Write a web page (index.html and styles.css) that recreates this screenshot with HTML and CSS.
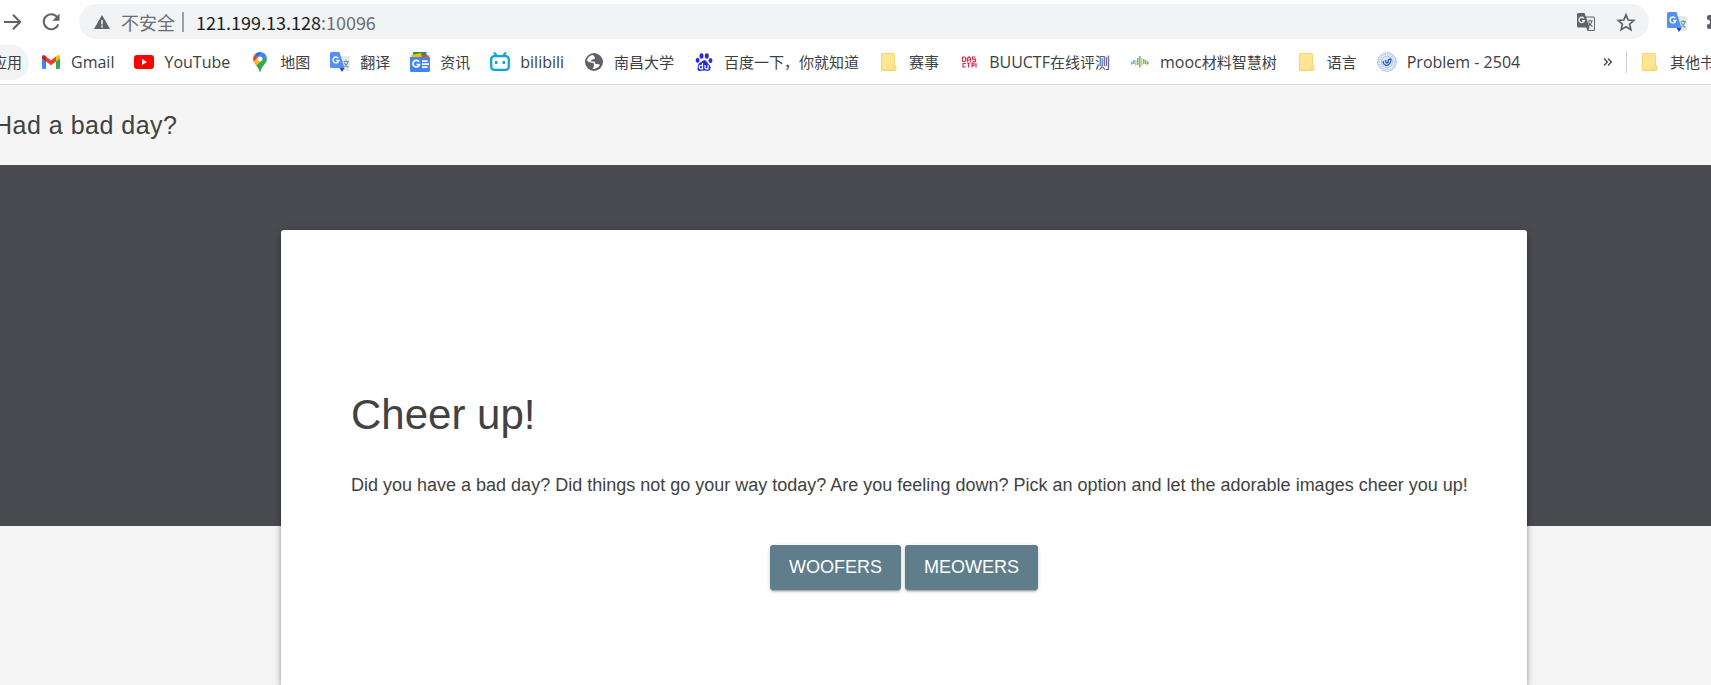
FILE: index.html
```html
<!DOCTYPE html>
<html lang="en">
<head>
<meta charset="utf-8">
<title>Had a bad day?</title>
<link rel="stylesheet" href="styles.css">
</head>
<body>
<svg class="defs" aria-hidden="true">
  <symbol id="folder" viewBox="0 0 20 20">
    <path d="M3.500 1h11q1.500 0 1.500 1.500v10.500q1.500.500 1.500 2v2q0 2-2 2h-12q-1.500 0-1.500-1.500v-15q0-1.500 1.500-1.500z" fill="#f6d76b"/>
    <path d="M4 2h10.500q.500 0 .500.500v10.500q-1.500.500-1.500 2v2.500h-9.500q-.800 0-.800-.800v-14q0-.700.800-.700z" fill="#ffe694"/>
    <path d="M15 14.200q1.300 0 1.300 1.400v1q0 1.200-1 1.200t-1-1v-1.400q0-1.200.700-1.200z" fill="#ffe694"/>
  </symbol>
  <symbol id="translate" viewBox="0 0 20 20">
    <path d="M8 4h10.500q1.200 0 1.200 1.200v12.600q0 1.200-1.200 1.200h-6z" fill="#e4e6e8"/>
    <path d="M1.500 0h8l5 16h-13q-1.500 0-1.500-1.500v-13q0-1.500 1.500-1.500z" fill="#5290f5"/>
    <path d="M9.500 16h5l-2.500 4z" fill="#2346b8"/>
    <path d="M8.300 6.200a2.900 2.900 0 1 0 .500 2.300h-2.600" fill="none" stroke="#fff" stroke-width="1.400"/>
    <path d="M13.500 9.500h5.500M16 8v1.500M18 9.500q-1 4-3.500 5.500M14.200 10.500q1 3 4.300 5" fill="none" stroke="#7d949c" stroke-width="1.100"/>
  </symbol>
</svg>

<header class="browser">
  <div class="toolbar">
    <button class="tool" aria-label="Forward">
      <svg width="20" height="20" viewBox="0 0 20 20"><path d="M1 10h16M10 2.800l7.200 7.200-7.200 7.200" fill="none" stroke="#5f6368" stroke-width="2"/></svg>
    </button>
    <button class="tool" aria-label="Reload">
      <svg width="20" height="20" viewBox="0 0 20 20"><path d="M16.200 5.200a7.500 7.500 0 1 0 1.100 7.100" fill="none" stroke="#5f6368" stroke-width="2"/><path d="M18.500 1.500v7.200h-7.200z" fill="#5f6368"/></svg>
    </button>
    <div class="omnibox">
      <svg width="16" height="16" viewBox="0 0 16 16" aria-hidden="true"><path d="M8 1l8 14h-16z" fill="#5f6368"/><path d="M8 6v4.500M8 11.500v2" stroke="#f1f3f4" stroke-width="1.600"/></svg>
      <span class="security">不安全</span>
      <div class="url" role="textbox" aria-label="Address" contenteditable="true" spellcheck="false"><span class="host">121.199.13.128</span>:10096</div>
      <button class="tool" aria-label="Translate this page">
        <svg width="20" height="20" viewBox="0 0 20 20"><path d="M2.500 1h6l1.300 3.500h7.700q1.500 0 1.500 1.500v11.500q0 1.500-1.500 1.500h-6l-1.200-3.500h-7.800q-1.500 0-1.500-1.500v-11.500q0-1.500 1.500-1.500z" fill="#5f6368"/><path d="M10.200 5.500h7q.800 0 .800.800v10.900q0 .800-.800.800h-4.700l1-2.500z" fill="#f1f3f4"/><path d="M8 6.500a2.700 2.700 0 1 0 .300 2.200h-2.300" fill="none" stroke="#f1f3f4" stroke-width="1.300"/><path d="M11.800 9h5M14.200 7.800v1.200M16 9q-.800 3.500-3.500 5M12.500 10.500q1 2.500 4 4" fill="none" stroke="#5f6368" stroke-width="1.100"/></svg>
      </button>
      <button class="tool" aria-label="Bookmark this page">
        <svg width="20" height="20" viewBox="0 0 20 20"><path d="M10 2.800l2.200 5.200 5.600.500-4.200 3.700 1.300 5.500-4.900-2.900-4.900 2.900 1.300-5.500-4.200-3.700 5.600-.500z" fill="none" stroke="#5f6368" stroke-width="1.700"/></svg>
      </button>
    </div>
    <button class="tool" aria-label="Google Translate"><svg width="20" height="20"><use href="#translate"/></svg></button>
    <button class="tool" aria-label="Extensions">
      <svg width="20" height="20" viewBox="0 0 20 20"><path d="M4 3h5v-1.500h3v1.500h5v14h-13q-2 0-2-2v-2.500q3 0 3-2.500t-3-2.500v-3q0-1.500 2-1.500z" fill="#5f6368"/></svg>
    </button>
  </div>

  <nav class="bookmarks" aria-label="Bookmarks">
    <a class="bookmark apps" href="#"><span class="cjk">应用</span></a>
    <a class="bookmark" href="#">
      <svg width="20" height="20" viewBox="0 0 20 20"><path d="M1 5v10.500q0 1.500 1.500 1.500h2.500v-9z" fill="#4285f4"/><path d="M19 5v10.500q0 1.500-1.500 1.500h-2.500v-9z" fill="#34a853"/><path d="M5 4.500l5 3.800 5-3.800v5l-5 3.800-5-3.800z" fill="#ea4335"/><path d="M1 5q0-2 1.800-2 .700 0 2.200 1.500v5l-4-3z" fill="#c5221f"/><path d="M19 5q0-2-1.800-2-.700 0-2.200 1.500v5l4-3z" fill="#fbbc04"/></svg>
      Gmail</a>
    <a class="bookmark" href="#">
      <svg width="20" height="20" viewBox="0 0 20 20"><rect y="3" width="20" height="14" rx="3" fill="#f00"/><path d="M8 7v6l5-3z" fill="#fff"/></svg>
      YouTube</a>
    <a class="bookmark" href="#">
      <svg width="20" height="20" viewBox="0 0 20 20"><path d="M10 0a7 7 0 0 0-5.400 2.500l3.400 3 4-5.200q-1-.300-2-.300z" fill="#1a73e8"/><path d="M4.600 2.500q-2.500 3.500-.800 7.500l4.200-4.500z" fill="#ea4335"/><path d="M12 .300l-4 5.200 4.200 3 4.200-4.500q-1.400-2.900-4.400-3.700z" fill="#4285f4"/><path d="M3.800 10q.700 1.500 2.400 3.500l6-5-4.200-3z" fill="#fbbc04"/><path d="M16.400 4l-10.200 9.500q2.300 2.500 3.100 5.500.200 1 .700 1t.700-1q.700-3.300 3.300-6 4.200-4.500 2.400-9z" fill="#34a853"/><circle cx="10" cy="7" r="2.500" fill="#fff"/></svg>
      <span class="cjk">地图</span></a>
    <a class="bookmark" href="#"><svg width="20" height="20"><use href="#translate"/></svg><span class="cjk">翻译</span></a>
    <a class="bookmark" href="#">
      <svg width="20" height="20" viewBox="0 0 20 20"><path d="M3 0h13.500v5h-13.500z" fill="#0f9d58"/><path d="M1 3l10-2 1.500 4h-11z" fill="#fbbc04"/><path d="M11 2l8 1.500-.500 3h-7z" fill="#ea4335"/><path d="M0 5h20v13.500q0 1.500-1.500 1.500h-17q-1.500 0-1.500-1.500z" fill="#4385f5"/><path d="M9 9.800a3.300 3.300 0 1 0 .500 2.700h-3M12 9.200h5.500M12 12.200h7M12 15.200h5.500" fill="none" stroke="#fff" stroke-width="1.700"/></svg>
      <span class="cjk">资讯</span></a>
    <a class="bookmark" href="#">
      <svg width="20" height="20" viewBox="0 0 20 20"><rect x="1.200" y="4.200" width="17.600" height="13.600" rx="3" fill="none" stroke="#0aa5dd" stroke-width="2.300"/><path d="M4.500 1l2.500 3M15.500 1l-2.500 3" stroke="#0aa5dd" stroke-width="2" stroke-linecap="round"/><path d="M6.200 9v3M13.800 9v3" stroke="#0aa5dd" stroke-width="2.400"/></svg>
      bilibili</a>
    <a class="bookmark" href="#">
      <svg width="20" height="20" viewBox="0 0 20 20"><circle cx="10" cy="10" r="9" fill="#5f6368"/><path d="M9 3q-5 .500-6 5.500 1.500 2 4 2 3 0 3 2 0 2.500-1.500 4.500 5 0 7.500-4-1.500-1.500-3.500-1-1.500 0-1.500-1.500 0-1-2-1h-2q0-1.800 1.800-2 2.200 0 2.200-2z" fill="#fff"/></svg>
      <span class="cjk">南昌大学</span></a>
    <a class="bookmark" href="#">
      <svg width="20" height="20" viewBox="0 0 20 20"><g fill="#2629df"><ellipse cx="7.500" cy="4" rx="2" ry="2.800"/><ellipse cx="12.800" cy="4" rx="2" ry="2.800"/><ellipse cx="3.600" cy="8.200" rx="1.900" ry="2.500"/><ellipse cx="16.500" cy="8.500" rx="1.900" ry="2.500"/><path d="M10 8q1.800 0 3 2t2.800 3.500q1.500 1.800.500 3.800t-3.300 1.500-6 0-3.500-1.300.500-4 3-3.500 3-2z"/></g><path d="M8.500 11v5.800h-1.800q-1.500 0-1.500-1.700t1.500-1.700h1.800M11 13v2.500q0 1.300 1.300 1.300h1.700v-3.800" fill="none" stroke="#fff" stroke-width="1.200"/></svg>
      <span class="cjk">百度一下，你就知道</span></a>
    <a class="bookmark" href="#"><svg width="20" height="20"><use href="#folder"/></svg><span class="cjk">赛事</span></a>
    <a class="bookmark" href="#">
      <svg width="20" height="20" viewBox="0 0 20 20"><path d="M3.500 5v4.500M3.500 5h2.200l1 1v2.500l-1 1h-2.200M8.500 9.800v-3.500l1.500-1.500 1.500 1.500v3.500M8.500 8h3M16.500 5h-3v2.200h3v2.300h-3M7 11.500h-3v3.500h3M9.500 11v4.500M8 11h3.500M13 15.500v-4.500h2v2.500h-2M17 11v4.500" fill="none" stroke="#d52b4c" stroke-width="1.200"/></svg>
      <span>BUUCTF<span class="cjk">在线评测</span></span></a>
    <a class="bookmark" href="#">
      <svg width="20" height="20" viewBox="0 0 20 20" fill="none" stroke-width="1.500"><path d="M1.800 9.500v3M3.800 8v4M7.800 6v7" stroke="#6ba7df"/><path d="M5.800 8v6M11.800 6v8" stroke="#edcc50"/><path d="M9.800 4v11.500M13.800 7v5" stroke="#78bc60"/><path d="M15.800 8v4.500" stroke="#70a8da"/><path d="M17.800 9.500v3" stroke="#de6e68"/></svg>
      <span>mooc<span class="cjk">材料智慧树</span></span></a>
    <a class="bookmark" href="#"><svg width="20" height="20"><use href="#folder"/></svg><span class="cjk">语言</span></a>
    <a class="bookmark" href="#">
      <svg width="20" height="20" viewBox="0 0 20 20"><circle cx="10" cy="10" r="9.300" fill="#f4f8fd" stroke="#a3bce3"/><circle cx="10" cy="10" r="7.500" fill="none" stroke="#b3c7e8" stroke-width="1.500" stroke-dasharray="1.500 1"/><circle cx="10" cy="10" r="5.800" fill="#dce7f7" stroke="#9db7e0" stroke-width=".700"/><path d="M6 9q.500 4 3.500 4.500 4-.500 4.500-6M8.500 8q0 3 1.500 3t1.500-4M12 7l2.500.500" fill="none" stroke="#2d60bd" stroke-width="1.400"/></svg>
      Problem - 2504</a>
    <button class="overflow" aria-label="More bookmarks">
      <svg width="10" height="10" viewBox="0 0 10 10"><path d="M1 1.500l3.300 3.500-3.300 3.500M5 1.500l3.300 3.500-3.300 3.500" fill="none" stroke="#4d5156" stroke-width="1.500"/></svg>
    </button>
    <a class="bookmark other" href="#"><svg width="20" height="20"><use href="#folder"/></svg><span class="cjk">其他书签</span></a>
  </nav>
</header>

<div class="page">
  <header class="site-header"><span class="site-title">Had a bad day?</span></header>
  <div class="ribbon"></div>
  <main class="card">
    <h3>Cheer up!</h3>
    <p>Did you have a bad day? Did things not go your way today? Are you feeling down? Pick an option and let the adorable images cheer you up!</p>
    <form class="actions">
      <button class="choice" type="button">WOOFERS</button>
      <button class="choice" type="button">MEOWERS</button>
    </form>
  </main>
</div>
</body>
</html>
```
FILE: styles.css
```css
* {
  box-sizing: border-box;
}

body {
  margin: 0;
  height: 100vh;
  display: flex;
  flex-direction: column;
  overflow: hidden;
  background: #f5f5f5;
  color: #424242;
  font-family: "Liberation Sans", Arial, sans-serif;
}

button {
  border: 0;
  padding: 0;
  background: none;
  font: inherit;
  color: inherit;
  cursor: pointer;
}

svg {
  display: block;
  flex: none;
}

.defs {
  position: absolute;
  width: 0;
  height: 0;
}

/* Browser chrome */

.browser {
  flex: none;
  background: #fff;
  border-bottom: 1px solid #dadce0;
  font-family: "Open Sans", "Noto Sans CJK SC", sans-serif;
}

.toolbar {
  display: flex;
  align-items: center;
  gap: 18px;
  height: 40px;
  padding-left: 3px;
  padding-top: 3px;
  margin-right: -14px;
}

.tool {
  flex: none;
}

.omnibox {
  flex: 1;
  display: flex;
  align-items: center;
  height: 35px;
  padding: 0 13px 0 15px;
  border-radius: 18px;
  background: #f1f3f4;
  color: #6a6e73;
  font: 18px/26px "Noto Sans CJK SC", "Noto Sans", sans-serif;
}

.security {
  margin-left: 11px;
}

.url {
  flex: 1;
  margin-left: 7px;
  padding-left: 12px;
  line-height: 20px;
  border-left: 2px solid #9aa0a6;
  outline: 0;
}

.host {
  color: #202124;
}

.omnibox .tool + .tool {
  margin-left: 20px;
}

.bookmarks {
  display: flex;
  align-items: center;
  gap: 20px;
  height: 44px;
  margin-left: -20px;
  margin-right: -19px;
  font-size: 16px;
  line-height: 22px;
  color: #3c4043;
  white-space: nowrap;
}

.bookmark {
  flex: none;
  display: flex;
  align-items: center;
  gap: 10px;
  color: inherit;
  text-decoration: none;
}

.cjk {
  font-family: "Noto Sans CJK SC", sans-serif;
  font-size: 15px;
}

.apps {
  height: 35px;
  padding: 0 7px 0 12px;
  margin-right: -8px;
  border-radius: 18px;
  background: #f1f3f4;
}

.overflow {
  margin-left: auto;
  margin-right: -7px;
}

.other {
  padding-left: 13px;
  border-left: 1px solid #cccfd3;
}

/* Page */

.page {
  flex: 1;
  display: grid;
  grid-template: 80px 65px 296px 1fr / 281px 1fr 184px;
  min-height: 0;
}

.site-header {
  grid-area: 1 / 1 / 2 / 4;
  display: flex;
  align-items: center;
  margin-left: -6px;
}

.site-title {
  font-size: 25px;
  line-height: 32px;
  letter-spacing: 0.02em;
}

.ribbon {
  grid-area: 2 / 1 / 4 / 4;
  background: #4a4b50;
}

.card {
  grid-area: 3 / 2 / 5 / 3;
  padding: 160px 40px 0;
  border-radius: 3px 3px 0 0;
  background: #fff;
  box-shadow: 0 4px 5px rgba(0, 0, 0, 0.14), 0 1px 12px rgba(0, 0, 0, 0.12), 0 2px 5px rgba(0, 0, 0, 0.2);
}

.card h3 {
  margin: 0 0 30px 30px;
  font-size: 42px;
  font-weight: 400;
  line-height: 50px;
}

.card p {
  margin: 0 0 0 30px;
  font-size: 18px;
  line-height: 30px;
}

.actions {
  display: flex;
  justify-content: center;
  gap: 4px;
  margin-top: 45px;
}

.choice {
  height: 45px;
  padding: 0 19px;
  border-radius: 3px;
  background: #607d8b;
  color: #fff;
  font-size: 18px;
  box-shadow: 0 2px 2px rgba(0, 0, 0, 0.14), 0 3px 1px -2px rgba(0, 0, 0, 0.2), 0 1px 5px rgba(0, 0, 0, 0.12);
}
```
